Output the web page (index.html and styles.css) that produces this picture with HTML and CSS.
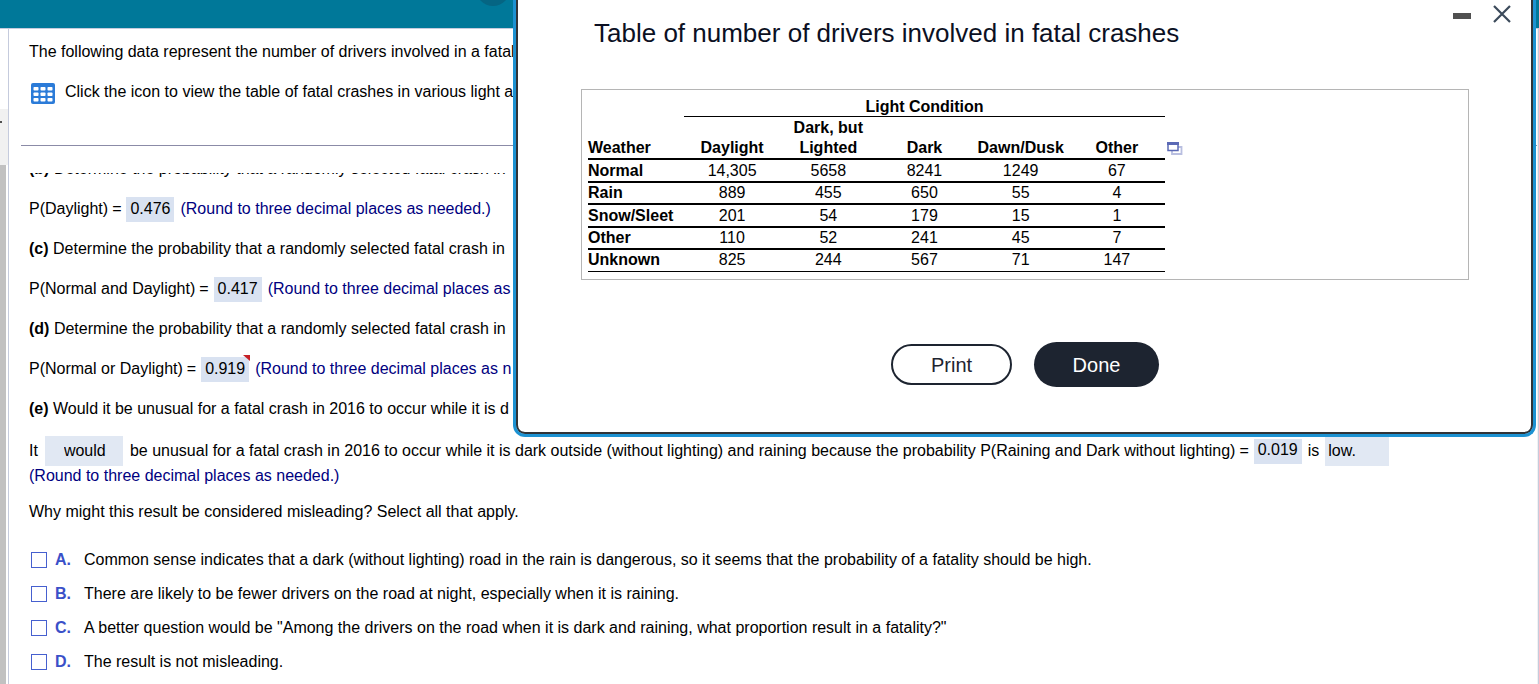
FILE: index.html
```html
<!DOCTYPE html>
<html lang="en">
<head>
<meta charset="utf-8">
<title>Fatal crashes</title>
<link rel="stylesheet" href="styles.css">
</head>
<body>
<div class="page">
  <header class="topbar"><span class="topbar-dot"></span></header>
  <div class="body">
    <aside class="rail">
      <div class="rail-head"></div>
      <div class="rail-arrow"><span class="tick"></span></div>
      <div class="rail-thumb"></div>
    </aside>
    <main class="question">
      <section class="intro">
        <p class="line">The following data represent the number of drivers involved in a fatal</p>
        <p class="line icon-line">
          <button class="grid-button" aria-label="View table">
            <svg width="24" height="21" viewBox="0 0 24 21"><rect width="24" height="21" rx="2" fill="#2b7bd8"/><g fill="#fff"><rect x="2.500" y="4" width="5" height="3.500" rx=".8"/><rect x="9.500" y="4" width="5" height="3.500" rx=".8"/><rect x="16.500" y="4" width="5" height="3.500" rx=".8"/><rect x="2.500" y="9.500" width="5" height="3.500" rx=".8"/><rect x="9.500" y="9.500" width="5" height="3.500" rx=".8"/><rect x="16.500" y="9.500" width="5" height="3.500" rx=".8"/><rect x="2.500" y="15" width="5" height="3.500" rx=".8"/><rect x="9.500" y="15" width="5" height="3.500" rx=".8"/><rect x="16.500" y="15" width="5" height="3.500" rx=".8"/></g></svg>
          </button>
          <span>Click the icon to view the table of fatal crashes in various light a</span>
        </p>
      </section>
      <section class="scroller">
        <p class="line scrolled"><b>(b)</b> Determine the probability that a randomly selected fatal crash in</p>
        <p class="line"><label for="b">P(Daylight)<span class="eq">=</span></label><input class="answer" id="b" value="0.476"><span class="hint">(Round to three decimal places as needed.)</span></p>
        <p class="line"><b>(c)</b> Determine the probability that a randomly selected fatal crash in</p>
        <p class="line"><label for="c">P(Normal and Daylight)<span class="eq">=</span></label><input class="answer" id="c" value="0.417"><span class="hint">(Round to three decimal places as</span></p>
        <p class="line"><b>(d)</b> Determine the probability that a randomly selected fatal crash in</p>
        <p class="line"><label for="d">P(Normal or Daylight)<span class="eq">=</span></label><span class="flagged"><input class="answer" id="d" value="0.919"></span><span class="hint">(Round to three decimal places as n</span></p>
        <p class="line"><b>(e)</b> Would it be unusual for a fatal crash in 2016 to occur while it is d</p>
        <p class="line conclusion"><label for="w">It</label><select class="choice choice-would" id="w"><option>would</option></select><label for="e">be unusual for a fatal crash in 2016 to occur while it is dark outside (without lighting) and raining because the probability P(Raining and Dark without lighting)<span class="eq">=</span></label><input class="answer" id="e" value="0.019"><label class="is" for="l">is</label><select class="choice choice-low" id="l"><option>low.</option></select></p>
        <p class="hint note">(Round to three decimal places as needed.)</p>
        <p class="why">Why might this result be considered misleading? Select all that apply.</p>
        <div class="options">
          <label class="option"><input type="checkbox"><b>A.</b><span>Common sense indicates that a dark (without lighting) road in the rain is dangerous, so it seems that the probability of a fatality should be high.</span></label>
          <label class="option"><input type="checkbox"><b>B.</b><span>There are likely to be fewer drivers on the road at night, especially when it is raining.</span></label>
          <label class="option"><input type="checkbox"><b>C.</b><span>A better question would be "Among the drivers on the road when it is dark and raining, what proportion result in a fatality?"</span></label>
          <label class="option"><input type="checkbox"><b>D.</b><span>The result is not misleading.</span></label>
        </div>
      </section>
    </main>
    <div class="edge"></div>
  </div>

  <div class="dialog" role="dialog" aria-labelledby="dialog-title">
    <div class="dialog-head">
      <h1 id="dialog-title">Table of number of drivers involved in fatal crashes</h1>
      <div class="controls">
        <button aria-label="Minimize"><svg width="18" height="18" viewBox="0 0 18 18"><path d="M0 8h18v6H0z" fill="#505050"/></svg></button>
        <button aria-label="Close"><svg width="18" height="18" viewBox="0 0 18 18"><path d="M1 1L17 17M17 1L1 17" stroke="#3b4a5a" stroke-width="2.2"/></svg></button>
      </div>
    </div>
    <div class="table-box">
      <table class="data">
        <colgroup><col class="col-name"><col span="5"></colgroup>
        <thead>
          <tr class="group"><td></td><th colspan="5">Light Condition</th></tr>
          <tr class="heads"><th>Weather</th><th>Daylight</th><th>Dark, but<br>Lighted</th><th>Dark</th><th>Dawn/Dusk</th><th>Other</th></tr>
        </thead>
        <tbody>
          <tr><th>Normal</th><td>14,305</td><td>5658</td><td>8241</td><td>1249</td><td>67</td></tr>
          <tr><th>Rain</th><td>889</td><td>455</td><td>650</td><td>55</td><td>4</td></tr>
          <tr><th>Snow/Sleet</th><td>201</td><td>54</td><td>179</td><td>15</td><td>1</td></tr>
          <tr><th>Other</th><td>110</td><td>52</td><td>241</td><td>45</td><td>7</td></tr>
          <tr><th>Unknown</th><td>825</td><td>244</td><td>567</td><td>71</td><td>147</td></tr>
        </tbody>
      </table>
      <button class="popout" aria-label="Copy data"><svg width="16" height="14" viewBox="0 0 16 14"><path d="M5 5h9.500v7H5z" fill="#fff" stroke="#b9bfe0" stroke-width="1.800"/><path d="M1 1h10v7.500H1z" fill="#fff" stroke="#5b69b5" stroke-width="1.500"/><path d="M0 0h12v3H0z" fill="#5b69b5"/></svg></button>
    </div>
    <div class="actions"><button class="print">Print</button><button class="done">Done</button></div>
  </div>
</div>
</body>
</html>
```
FILE: styles.css
```css
* { box-sizing: border-box; }
body { margin: 0; background: #fff; color: #000; font: 16px/20px "Liberation Sans", Arial, sans-serif; }
p, h1 { margin: 0; }
button { padding: 0; border: 0; background: none; font: inherit; color: inherit; display: block; cursor: pointer; }
button svg { display: block; }
.page { position: relative; min-height: 100vh; display: flex; flex-direction: column; overflow: hidden; }
.topbar { height: 28px; background: #007899; position: relative; }
.topbar-dot { position: absolute; left: 476px; top: -28px; width: 34px; height: 34px; border-radius: 50%; background: #056583; }
.body { flex: 1; display: flex; border-top: 1px solid #c5cbdd; }
.rail { width: 9px; border-right: 1px solid #c5cbdd; display: flex; flex-direction: column; flex: none; }
.rail-head { height: 80px; }
.rail-arrow { height: 56px; background: #f1f1f1; padding-top: 12px; }
.tick { display: block; width: 2px; height: 2px; background: #505050; }
.rail-thumb { flex: 1; background: #c1c1c1; width: 6px; }
.edge { width: 2px; background: #f1f1f1; border-right: 1px solid #c5cbdd; flex: none; }
.question { flex: 1; min-width: 0; white-space: nowrap; }
.intro { margin: 0 0 0 12px; padding: 3px 0 0 8px; height: 117px; border-bottom: 1px solid #8b8ba7; }
.line { height: 40px; line-height: 40px; }
.icon-line { display: flex; align-items: center; gap: 10px; padding-left: 2px; }
.grid-button { padding-top: 2px; }
.scroller { margin-top: 27px; padding-left: 20px; overflow: hidden; }
.scrolled { margin-top: -24px; }
.eq { margin: 0 5px 0 4px; }
.hint { color: #00007f; }
.answer { width: 48px; height: 25px; padding: 0 0 2px; border: 0; border-radius: 0; background: #d9e2f1; font: inherit; line-height: 20px; color: inherit; text-align: center; vertical-align: middle; margin: 0 6px 0 0; }
.flagged { position: relative; }
.flagged::after { content: ""; position: absolute; top: -5px; right: 5px; border-top: 6px solid #c62026; border-left: 7px solid transparent; }
.conclusion { height: 38px; line-height: 38px; margin-top: 3px; display: flex; align-items: center; }
.choice { appearance: none; border: 0; border-radius: 0; background: #e1e8f3; height: 30px; font: inherit; line-height: 30px; color: inherit; padding: 0; margin: 0; }
.choice-would { width: 78px; padding-left: 19px; margin: 0 7px; }
.choice-low { width: 64px; padding-left: 3px; margin-left: 6px; }
.note { margin-top: -4px; }
.why { margin-top: 16px; }
.options { margin-top: 21px; }
.option { display: flex; align-items: center; height: 34px; padding-left: 2px; }
.option input { appearance: none; width: 16px; height: 16px; margin: 0 8px 0 0; border: 1px solid #4660cf; outline: 0; background: #fff; }
.option b { width: 29px; color: #3a50c8; }
.dialog { position: absolute; top: 0; left: 513px; right: 3px; padding: 0 64px 47px 65px; background: #fff; border: 3px solid #1c92d2; border-top: 0; border-radius: 0 0 12px 12px; box-shadow: inset 2px 0 #303438, inset -2px 0 #303438, inset 0 -2px #303438; }
.dialog-head { display: flex; justify-content: space-between; }
h1 { padding: 18px 0 0 13px; font-size: 26px; line-height: 30px; font-weight: 400; color: #0b1023; }
.controls { display: flex; align-items: flex-start; gap: 22px; margin-right: -42px; padding-top: 5px; }
.table-box { margin-top: 41px; border: 1px solid #b5b5b5; padding: 7px 6px 6px; display: flex; height: 191px; }
.data { border-collapse: collapse; table-layout: fixed; width: 577px; height: fit-content; text-align: center; }
.data th, .data td { padding: 0; font-weight: 400; }
.data th { font-weight: 700; }
.col-name { width: 96px; }
.group { height: 19px; line-height: 19px; }
.group th { border-bottom: 1px solid #000; }
.heads { height: 41px; vertical-align: bottom; }
.heads th { padding-top: 1px; }
tbody tr { height: 22px; border-top: 2px solid #000; }
tbody tr:nth-child(odd) { height: 23px; }
tbody tr:last-child { height: 22px; border-bottom: 1px solid #000; }
tr > th:first-child { text-align: left; }
.popout { align-self: flex-start; margin: 45px 0 0 2px; }
.actions { display: flex; align-items: center; justify-content: center; gap: 22px; margin-top: 62px; color: #1d2430; }
.print, .done { font-size: 20px; line-height: 24px; border-radius: 23px; }
.print { width: 121px; height: 41px; border: 2px solid #1d2430; }
.done { width: 125px; height: 45px; color: #fff; background: #1d2430; }
```
